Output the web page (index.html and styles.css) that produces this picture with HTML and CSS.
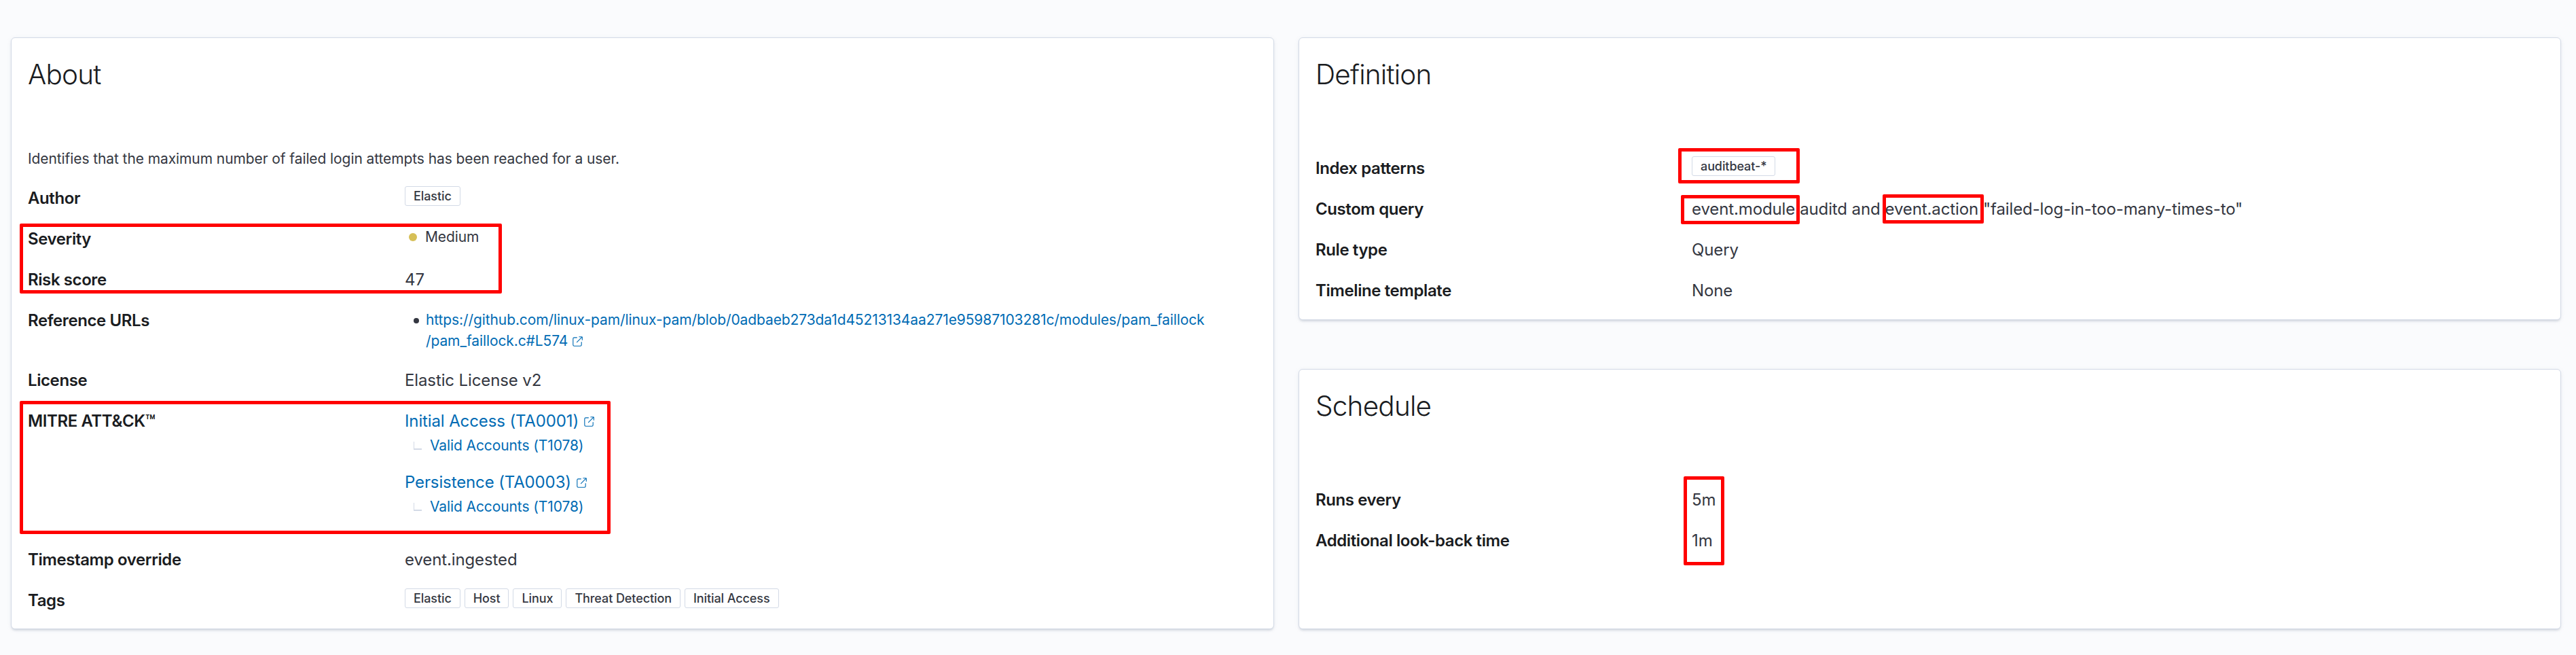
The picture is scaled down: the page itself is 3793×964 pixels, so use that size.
FILE: index.html
```html
<!DOCTYPE html>
<html lang="en">
<head>
<meta charset="utf-8">
<title>Rule details</title>
<link rel="stylesheet" href="styles.css">
</head>
<body>
<svg width="0" height="0" class="sprite">
  <symbol id="popout" viewBox="0 0 16 16">
    <path d="M13 8.5a.5.5 0 1 1 1 0V12a2 2 0 0 1-2 2H4a2 2 0 0 1-2-2V4a2 2 0 0 1 2-2h3.5a.5.5 0 0 1 0 1H4a1 1 0 0 0-1 1v8a1 1 0 0 0 1 1h8a1 1 0 0 0 1-1V8.500Zm-5.120.339a.5.5 0 1 1-.706-.707L13.305 2H10.500a.5.5 0 1 1 0-1H14a1 1 0 0 1 1 1v3.500a.5.5 0 1 1-1 0V2.722L7.880 8.840Z"/>
  </symbol>
</svg>
<main class="page">
  <section class="panel about">
    <h2 class="title">About</h2>
    <p class="description">Identifies that the maximum number of failed login attempts has been reached for a user.</p>
    <dl class="list">
      <div class="row"><dt>Author</dt><dd class="badges"><span class="badge">Elastic</span></dd></div>
      <div class="row severity"><dt>Severity</dt><dd class="health"><span class="dot"></span><span>Medium</span></dd></div>
      <div class="row"><dt>Risk score</dt><dd>47</dd></div>
      <div class="row urls"><dt>Reference URLs</dt><dd><ul><li><i class="bullet"></i><a>https://github.com/linux-pam/linux-pam/blob/0adbaeb273da1d45213134aa271e95987103281c/modules/pam_faillock<br>/pam_faillock.c#L574<svg class="ext"><use href="#popout"/></svg></a></li></ul></dd></div>
      <div class="row"><dt>License</dt><dd>Elastic License v2</dd></div>
      <div class="row mitre"><dt>MITRE ATT&amp;CK™</dt><dd>
        <div class="tactic"><a>Initial Access (TA0001)<svg class="ext"><use href="#popout"/></svg></a>
          <div class="technique"><i class="branch"></i><a>Valid Accounts (T1078)</a></div></div>
        <div class="tactic"><a>Persistence (TA0003)<svg class="ext"><use href="#popout"/></svg></a>
          <div class="technique"><i class="branch"></i><a>Valid Accounts (T1078)</a></div></div>
      </dd></div>
      <div class="row"><dt>Timestamp override</dt><dd>event.ingested</dd></div>
      <div class="row"><dt>Tags</dt><dd class="badges"><span class="badge">Elastic</span><span class="badge">Host</span><span class="badge">Linux</span><span class="badge">Threat Detection</span><span class="badge">Initial Access</span></dd></div>
    </dl>
  </section>
  <div class="side">
    <section class="panel definition">
      <h2 class="title">Definition</h2>
      <dl class="list">
        <div class="row"><dt>Index patterns</dt><dd class="badges"><span class="badge">auditbeat-*</span></dd></div>
        <div class="row"><dt>Custom query</dt><dd class="query"><span>event.module</span><span>auditd and</span><span>event.action</span><span>"failed-log-in-too-many-times-to"</span></dd></div>
        <div class="row"><dt>Rule type</dt><dd>Query</dd></div>
        <div class="row"><dt>Timeline template</dt><dd>None</dd></div>
      </dl>
    </section>
    <section class="panel schedule">
      <h2 class="title">Schedule</h2>
      <dl class="list">
        <div class="row"><dt>Runs every</dt><dd>5m</dd></div>
        <div class="row"><dt>Additional look-back time</dt><dd>1m</dd></div>
      </dl>
    </section>
  </div>
</main>
<div class="mark m-severity"></div>
<div class="mark m-mitre"></div>
<div class="mark m-index"></div>
<div class="mark m-module"></div>
<div class="mark m-action"></div>
<div class="mark m-schedule"></div>
</body>
</html>
```

FILE: styles.css
```css
* { box-sizing: border-box; }
body { margin: 0; width: 3793px; height: 964px; overflow: hidden; background: #fafbfd; color: #343741; font: 24px/36px Inter, "Liberation Sans", sans-serif; letter-spacing: -0.12px; }
.sprite { position: absolute; }
.page { display: grid; grid-template-columns: 1860px 1859px; column-gap: 36px; padding: 55px 0 0 16px; }
.side { display: grid; grid-template-rows: 416px 383px; row-gap: 72px; }
.panel { background: #fff; border: 1px solid #d3dae6; border-radius: 6px; box-shadow: 0 3px 3px -1px rgba(152,162,179,.3), 0 1px 7px -2px rgba(152,162,179,.3); padding: 24px 24px 0; }
.about { height: 871px; }
.title { margin: 6px 0 0; font-size: 40.5px; line-height: 48px; font-weight: 300; letter-spacing: -0.81px; color: #1a1c21; }
.description { margin: 84px 0 0; font-size: 21px; line-height: 32px; letter-spacing: -0.09px; }
.list { margin: 0; }
.about .list { margin-top: 23.5px; }
.side .list { margin-top: 96px; }
.row { display: grid; grid-template-columns: 555px 1fr; height: 60px; }
.side .row { grid-template-columns: 554px 1fr; }
.severity { height: 60.75px; }
dt { font-weight: 600; color: #1a1c21; letter-spacing: -0.41px; }
dd { margin: 0; white-space: nowrap; }
.badges { display: flex; gap: 6px; align-items: flex-start; }
.badge { height: 29px; border: 1px solid #d3dae6; border-radius: 3px; padding: 0 12px; font-size: 18px; line-height: 27px; font-weight: 500; letter-spacing: -0.09px; }
.health { display: flex; gap: 12px; padding-left: 6px; font-size: 21px; line-height: 30px; letter-spacing: -0.1px; }
.dot { width: 12px; height: 12px; border-radius: 50%; background: #d6bf57; margin-top: 9px; }
a { color: #006bb4; }
.ext { display: inline-block; width: 18px; height: 18px; margin-left: 6px; fill: currentColor; vertical-align: -2px; }
.urls { height: 87.5px; }
ul { margin: 0; padding: 0 0 0 13px; list-style: none; font-size: 21px; line-height: 31.5px; letter-spacing: -0.1px; }
li { display: flex; padding-top: 0.5px; }
.bullet { width: 8px; height: 8px; border-radius: 50%; background: #343741; margin: 13px 10px 0 0; }
.urls .ext { margin-left: 5px; vertical-align: -3px; }
.mitre { height: 204px; }
.tactic { height: 90px; }
.technique { display: flex; font-size: 21px; line-height: 36px; letter-spacing: -0.1px; }
.branch { width: 12px; height: 12px; border: solid #d3dae6; border-width: 0 0 2px 1px; margin: 12px 12px 0 13px; }
.query { display: flex; gap: 7px; }
.mark { position: absolute; border: 5px solid #f00; border-radius: 2px; }
.m-severity { left: 29px; top: 329px; width: 710px; height: 103px; }
.m-mitre { left: 29px; top: 590px; width: 870px; height: 196px; }
.m-index { left: 2471px; top: 218px; width: 179px; height: 52px; }
.m-module { left: 2475px; top: 287px; width: 175px; height: 43px; }
.m-action { left: 2772px; top: 286px; width: 149px; height: 43px; }
.m-schedule { left: 2479px; top: 701px; width: 60px; height: 131px; }
```
